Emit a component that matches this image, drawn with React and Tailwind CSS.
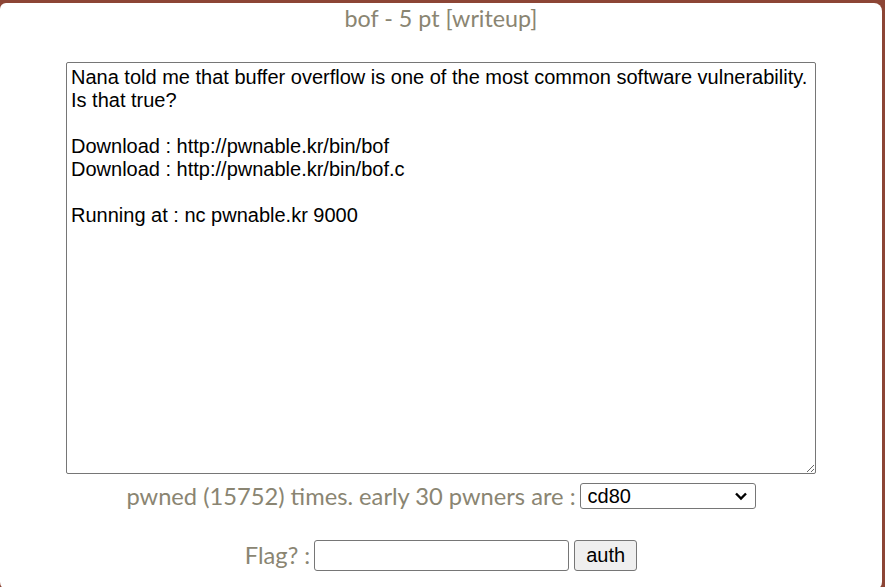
const desc = `Nana told me that buffer overflow is one of the most common software vulnerability. 
Is that true?

Download : http://pwnable.kr/bin/bof
Download : http://pwnable.kr/bin/bof.c

Running at : nc pwnable.kr 9000
`

export default function App() {
  return (
    <div className="h-[587px] overflow-hidden bg-[#8c4535] pt-[3px] pr-[3px]">
      <div className="h-[587px] rounded-tl-[6px] rounded-tr-[8px] rounded-b-[8px] bg-white font-['Lato',sans-serif] text-[#8a8572]">
        <div className="pt-[2px] text-center text-[23.3px] leading-[27px]">bof - 5 pt [writeup]</div>

        <div className="mt-[30px] flex justify-center">
          <textarea
            readOnly
            defaultValue={desc}
            className="h-[412px] w-[750px] rounded-[2px] border border-[#767676] px-[4px] py-[3px] font-['Liberation_Sans',Arial,sans-serif] text-[20px] leading-[23px] text-black outline-none"
          />
        </div>

        <div className="mt-[8px] flex h-[28px] items-center justify-center text-[23.7px] leading-[28px]">
          <span>pwned (15752) times. early 30 pwners are :</span>
          <div className="relative ml-[4px] flex">
            <select className="h-[26px] w-[176px] appearance-none rounded-[3px] border border-[#767676] bg-white pl-[7px] font-['Liberation_Sans',Arial,sans-serif] text-[20px] leading-[22px] text-black outline-none">
              <option>cd80</option>
            </select>
            <svg className="pointer-events-none absolute right-[8px] top-[8px]" width="14" height="10" viewBox="0 0 14 10" fill="none">
              <path d="M2 2.5 L7 7.5 L12 2.5" stroke="#000" strokeWidth="2.4" />
            </svg>
          </div>
        </div>

        <div className="mt-[30px] flex h-[31px] items-center justify-center text-[23.7px] leading-[31px]">
          <span>Flag? :</span>
          <input className="ml-[4px] h-[31px] w-[255px] rounded-[3px] border border-[#767676] bg-white outline-none" />
          <button className="ml-[5px] h-[31px] w-[63px] rounded-[3px] border border-[#767676] bg-[#efefef] font-['Liberation_Sans',Arial,sans-serif] text-[20px] leading-[29px] text-black">auth</button>
        </div>
      </div>
    </div>
  )
}
